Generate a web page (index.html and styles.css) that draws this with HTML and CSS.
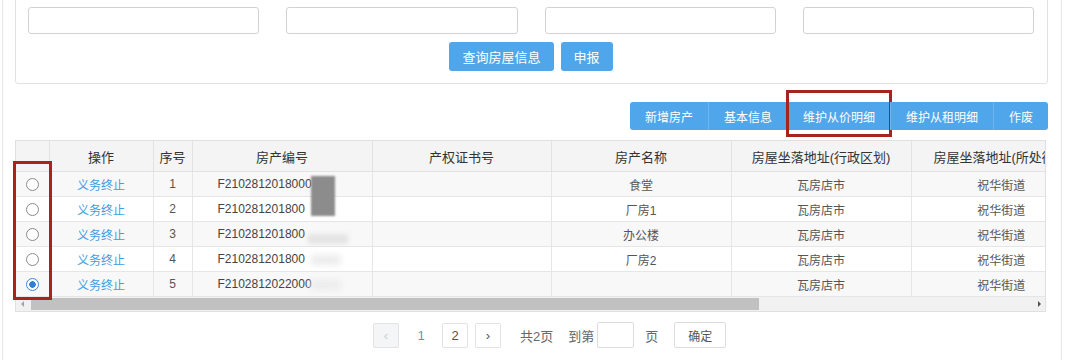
FILE: index.html
```html
<!DOCTYPE html>
<html lang="zh-CN">
<head>
    <meta charset="UTF-8">
    <title>房产信息</title>
    <link rel="stylesheet" href="styles.css">
</head>
<body>
    <div class="page">
        <div class="search">
            <div class="fields">
                <input type="text">
                <input type="text">
                <input type="text">
                <input type="text">
            </div>
            <div class="search-actions">
                <button class="btn">查询房屋信息</button>
                <button class="btn">申报</button>
            </div>
        </div>

        <div class="toolbar">
            <button class="tool">新增房产</button>
            <button class="tool">基本信息</button>
            <button class="tool marked">维护从价明细<span class="mark"></span></button>
            <button class="tool">维护从租明细</button>
            <button class="tool">作废</button>
        </div>

        <div class="grid">
            <div class="grid-view">
                <table>
                    <colgroup>
                        <col style="width: 33px">
                        <col style="width: 104px">
                        <col style="width: 39px">
                        <col style="width: 180px">
                        <col style="width: 179px">
                        <col style="width: 180px">
                        <col style="width: 180px">
                        <col style="width: 180px">
                    </colgroup>
                    <thead>
                        <tr>
                            <th></th>
                            <th>操作</th>
                            <th>序号</th>
                            <th>房产编号</th>
                            <th>产权证书号</th>
                            <th>房产名称</th>
                            <th>房屋坐落地址(行政区划)</th>
                            <th class="clip">房屋坐落地址(所处街道)</th>
                        </tr>
                    </thead>
                    <tbody>
                        <tr>
                            <td><span class="radio"></span></td>
                            <td><a href="#">义务终止</a></td>
                            <td>1</td>
                            <td class="code">F2102812018000<span class="blot dark"></span></td>
                            <td></td>
                            <td>食堂</td>
                            <td>瓦房店市</td>
                            <td>祝华街道</td>
                        </tr>
                        <tr>
                            <td><span class="radio"></span></td>
                            <td><a href="#">义务终止</a></td>
                            <td>2</td>
                            <td class="code">F210281201800</td>
                            <td></td>
                            <td>厂房1</td>
                            <td>瓦房店市</td>
                            <td>祝华街道</td>
                        </tr>
                        <tr>
                            <td><span class="radio"></span></td>
                            <td><a href="#">义务终止</a></td>
                            <td>3</td>
                            <td class="code">F210281201800<span class="blot light"></span></td>
                            <td></td>
                            <td>办公楼</td>
                            <td>瓦房店市</td>
                            <td>祝华街道</td>
                        </tr>
                        <tr>
                            <td><span class="radio"></span></td>
                            <td><a href="#">义务终止</a></td>
                            <td>4</td>
                            <td class="code">F210281201800<span class="blot faint"></span></td>
                            <td></td>
                            <td>厂房2</td>
                            <td>瓦房店市</td>
                            <td>祝华街道</td>
                        </tr>
                        <tr>
                            <td><span class="radio checked"></span></td>
                            <td><a href="#">义务终止</a></td>
                            <td>5</td>
                            <td class="code">F2102812022000<span class="blot faint"></span></td>
                            <td></td>
                            <td></td>
                            <td>瓦房店市</td>
                            <td>祝华街道</td>
                        </tr>
                    </tbody>
                </table>
            </div>
            <div class="hscroll">
                <span class="arrow left"></span>
                <span class="thumb"></span>
                <span class="arrow right"></span>
            </div>
            <span class="col-mark"></span>
        </div>

        <div class="pager">
            <span class="page-btn disabled">‹</span>
            <span class="page-num">1</span>
            <span class="page-btn">2</span>
            <span class="page-btn">›</span>
            <span class="page-text">共2页</span>
            <span class="page-text">到第</span>
            <input type="text" class="page-input">
            <span class="page-text">页</span>
            <button class="page-ok">确定</button>
        </div>
    </div>
</body>
</html>
```

FILE: styles.css
```css
body {
    margin: 0;
    background-color: #fff;
    font-family: "Liberation Sans", "Noto Sans CJK SC", sans-serif;
    color: #555;
    overflow: hidden;
}
.page {
    display: flow-root;
    box-sizing: border-box;
    width: 1060px;
    height: 360px;
    margin-left: 2px;
    padding: 0 13px 0 12px;
    border-left: 1px solid #e6e6e6;
    border-right: 1px solid #e6e6e6;
}
.search {
    margin-top: -20px;
    padding: 26px 13px 12px 12px;
    border: 1px solid #e2e2e2;
    border-radius: 3px;
}
.fields {
    display: grid;
    grid-template-columns: repeat(4, 1fr);
    column-gap: 27px;
}
.fields input {
    box-sizing: border-box;
    height: 27px;
    border: 1px solid #d2d2d2;
    border-radius: 3px;
    width: 100%;
}
.search-actions {
    display: flex;
    justify-content: center;
    gap: 7px;
    margin-top: 8px;
}
.btn {
    height: 29px;
    padding: 0 13px;
    border: none;
    border-radius: 3px;
    background-color: #4fa6ea;
    color: #fff;
    font-family: inherit;
    font-size: 13px;
}
.toolbar {
    display: flex;
    justify-content: flex-end;
    margin-top: 18px;
}
.tool {
    position: relative;
    height: 28px;
    padding: 0 15px;
    border: none;
    border-left: 1px solid #6cb5ee;
    background-color: #4fa6ea;
    color: #fff;
    font-family: inherit;
    font-size: 12px;
}
.tool:first-child {
    border-left: none;
    border-radius: 3px 0 0 3px;
}
.tool:last-child {
    border-radius: 0 3px 3px 0;
}
.mark {
    position: absolute;
    top: -12px;
    bottom: -7px;
    left: -2px;
    right: -2px;
    border: 3px solid #a6241d;
}
.grid {
    position: relative;
    margin-top: 10px;
    width: 1029px;
    border: 1px solid #e0e0e0;
}
.grid-view {
    overflow: hidden;
}
table {
    table-layout: fixed;
    border-collapse: collapse;
    width: 1075px;
}
th {
    height: 30px;
    background-color: #f4f4f4;
    color: #333;
    font-size: 13px;
    font-weight: normal;
    border-left: 1px solid #e2e2e2;
    border-bottom: 1px solid #e2e2e2;
    white-space: nowrap;
    overflow: hidden;
    padding: 0;
}
th.clip {
    text-align: left;
    padding-left: 22px;
}
th:first-child,
td:first-child {
    border-left: none;
}
td {
    height: 24px;
    padding: 0;
    text-align: center;
    font-size: 12px;
    color: #555;
    border-left: 1px solid #e6e6e6;
    border-bottom: 1px solid #e6e6e6;
    white-space: nowrap;
}
tbody tr:nth-child(odd) td {
    background-color: #f8f8f8;
}
td a {
    color: #3f9de2;
    text-decoration: none;
}
td.code {
    position: relative;
    text-align: left;
    padding-left: 25px;
    color: #444;
}
.radio {
    display: inline-block;
    box-sizing: border-box;
    width: 13px;
    height: 13px;
    border: 1px solid #8a8a8a;
    border-radius: 50%;
    vertical-align: middle;
    background-color: #fff;
}
.radio.checked {
    border-color: #3b86d6;
    background: radial-gradient(circle, #2f7fd8 0, #2f7fd8 3px, #fff 3.5px);
}
.blot {
    position: absolute;
    left: 118px;
    width: 24px;
    filter: blur(1px);
}
.blot.dark {
    top: 4px;
    height: 40px;
    background-color: #8c8c8c;
    z-index: 1;
}
.blot.light {
    top: 12px;
    left: 115px;
    width: 40px;
    height: 10px;
    background-color: #e4e4e4;
    filter: blur(2px);
}
.blot.faint {
    top: 8px;
    left: 118px;
    width: 30px;
    height: 10px;
    background-color: #ececec;
    filter: blur(3px);
}
.col-mark {
    position: absolute;
    box-sizing: border-box;
    top: 20px;
    left: -3px;
    width: 39px;
    height: 139px;
    border: 3px solid #a6241d;
    z-index: 2;
}
.hscroll {
    position: relative;
    height: 14px;
    background-color: #f1f1f1;
}
.thumb {
    position: absolute;
    top: 1px;
    left: 15px;
    width: 728px;
    height: 12px;
    background-color: #c1c1c1;
}
.arrow {
    position: absolute;
    top: 4px;
    width: 0;
    height: 0;
    border-top: 3px solid transparent;
    border-bottom: 3px solid transparent;
}
.arrow.left {
    left: 5px;
    border-right: 3px solid #a3a3a3;
}
.arrow.right {
    right: 4px;
    border-left: 3px solid #505050;
}
.pager {
    display: flex;
    align-items: center;
    justify-content: flex-start;
    padding-left: 358px;
    margin-top: 10px;
    font-size: 12px;
    color: #666;
}
.page-btn {
    box-sizing: border-box;
    width: 26px;
    height: 25px;
    line-height: 23px;
    text-align: center;
    border: 1px solid #e3e3e3;
    border-radius: 2px;
    margin-right: 7px;
    font-size: 13px;
    color: #555;
}
.page-btn.disabled {
    background-color: #f3f5f7;
    color: #ccc;
}
.page-num {
    width: 30px;
    text-align: center;
    margin-right: 6px;
    color: #4d9fc9;
    font-size: 13px;
}
.page-text {
    margin-left: 12px;
    margin-right: 3px;
    font-size: 13px;
}
.page-input {
    box-sizing: border-box;
    width: 37px;
    height: 26px;
    margin: 0 -1px 0 0;
    border: 1px solid #ddd;
    border-radius: 2px;
}
.page-ok {
    box-sizing: border-box;
    height: 26px;
    width: 52px;
    margin-left: 13px;
    border: 1px solid #ddd;
    border-radius: 2px;
    background-color: #fff;
    color: #555;
    font-family: inherit;
    font-size: 12px;
}
```
